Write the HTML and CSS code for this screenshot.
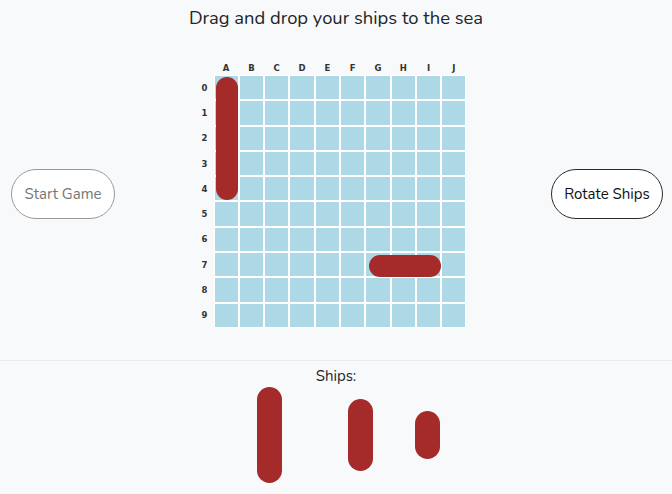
FILE: index.html
```html
<!DOCTYPE html>
<html lang="en">
<head>
<meta charset="utf-8">
<title>Battleship - Place your ships</title>
<link rel="stylesheet" href="styles.css">
</head>
<body>
  <h1 class="title">Drag and drop your ships to the sea</h1>

  <div class="stage">
    <button class="btn btn-start" type="button">Start Game</button>

    <div class="board">
      <div class="corner"></div>
      <div class="col-labels">
        <span>A</span><span>B</span><span>C</span><span>D</span><span>E</span>
        <span>F</span><span>G</span><span>H</span><span>I</span><span>J</span>
      </div>
      <div class="row-labels">
        <span>0</span><span>1</span><span>2</span><span>3</span><span>4</span>
        <span>5</span><span>6</span><span>7</span><span>8</span><span>9</span>
      </div>
      <div class="sea" id="sea">
        <div class="ship ship-placed ship-v5"></div>
        <div class="ship ship-placed ship-h3"></div>
      </div>
    </div>

    <button class="btn btn-rotate" type="button">Rotate Ships</button>
  </div>

  <div class="dock">
    <div class="dock-label">Ships:</div>
    <div class="fleet">
      <div class="slot slot-4"><div class="ship ship-4"></div></div>
      <div class="slot slot-3"><div class="ship ship-3"></div></div>
      <div class="slot slot-2"><div class="ship ship-2"></div></div>
    </div>
  </div>

  <script>
    (function () {
      var sea = document.getElementById('sea');
      var frag = document.createDocumentFragment();
      for (var i = 0; i < 100; i++) {
        var c = document.createElement('div');
        c.className = 'cell';
        frag.appendChild(c);
      }
      sea.insertBefore(frag, sea.firstChild);
    })();
  </script>
</body>
</html>
```

FILE: styles.css
```css
* { box-sizing: border-box; }

html, body {
  margin: 0;
  padding: 0;
  background: #f8f9fb;
}

body {
  font-family: "Nunito", Lato, "Noto Sans", sans-serif;
  color: #212529;
  width: 672px;
  height: 494px;
  overflow: hidden;
}

.title {
  margin: 0;
  padding-top: 7px;
  font-size: 18.4px;
  font-weight: 400;
  line-height: 22px;
  text-align: center;
  color: #212529;
}

.stage {
  display: flex;
  align-items: center;
  justify-content: space-between;
  padding: 31px 9px 32px 11px;
  border-bottom: 1px solid #e8eaed;
}

.btn {
  height: 50px;
  border-radius: 25px;
  background: #ffffff;
  font-family: "Nunito", Lato, "Noto Sans", sans-serif;
  font-size: 15px;
  padding: 0;
  cursor: pointer;
}

.btn-start {
  width: 104px;
  border: 1px solid #9a9a9a;
  color: #767676;
}

.btn-rotate {
  width: 112px;
  border: 1px solid #2a2a2a;
  color: #111111;
}

.board {
  display: grid;
  grid-template-columns: 18px 253px;
  grid-template-rows: 15px 253px;
  margin-right: 4px;
}

.col-labels,
.row-labels {
  display: grid;
  font-family: "DejaVu Sans", sans-serif;
  font-size: 8.5px;
  font-weight: 600;
  color: #333;
}

.col-labels {
  grid-template-columns: repeat(10, 1fr);
  align-items: center;
  justify-items: center;
}

.row-labels {
  grid-template-rows: repeat(10, 1fr);
  align-items: center;
  justify-items: center;
}

.sea {
  position: relative;
  display: grid;
  grid-template-columns: repeat(10, 1fr);
  grid-template-rows: repeat(10, 1fr);
}

.cell {
  background: #add8e6;
  border: 1px solid #ffffff;
}

.ship {
  background: #a52a2a;
  border-radius: 12px;
}

.ship-placed {
  position: absolute;
}

.ship-v5 {
  left: 2px;
  top: 2px;
  width: 22px;
  height: 123px;
  border-radius: 11px;
}

.ship-h3 {
  left: 155px;
  top: 179.5px;
  width: 72.5px;
  height: 22px;
  border-radius: 11px;
}

.dock {
  text-align: center;
}

.dock-label {
  padding-top: 5px;
  font-size: 15px;
  line-height: 21px;
}

.fleet {
  display: flex;
  justify-content: center;
  gap: 7px;
}

.slot {
  height: 96px;
  display: flex;
  align-items: center;
  justify-content: center;
}

.slot-4 { width: 96px; }
.slot-3 { width: 72px; }
.slot-2 { width: 48px; }

.fleet .ship {
  width: 25px;
  border-radius: 12.5px;
}

.ship-4 { height: 96px; }
.ship-3 { height: 72px; }
.ship-2 { height: 48px; }
```
